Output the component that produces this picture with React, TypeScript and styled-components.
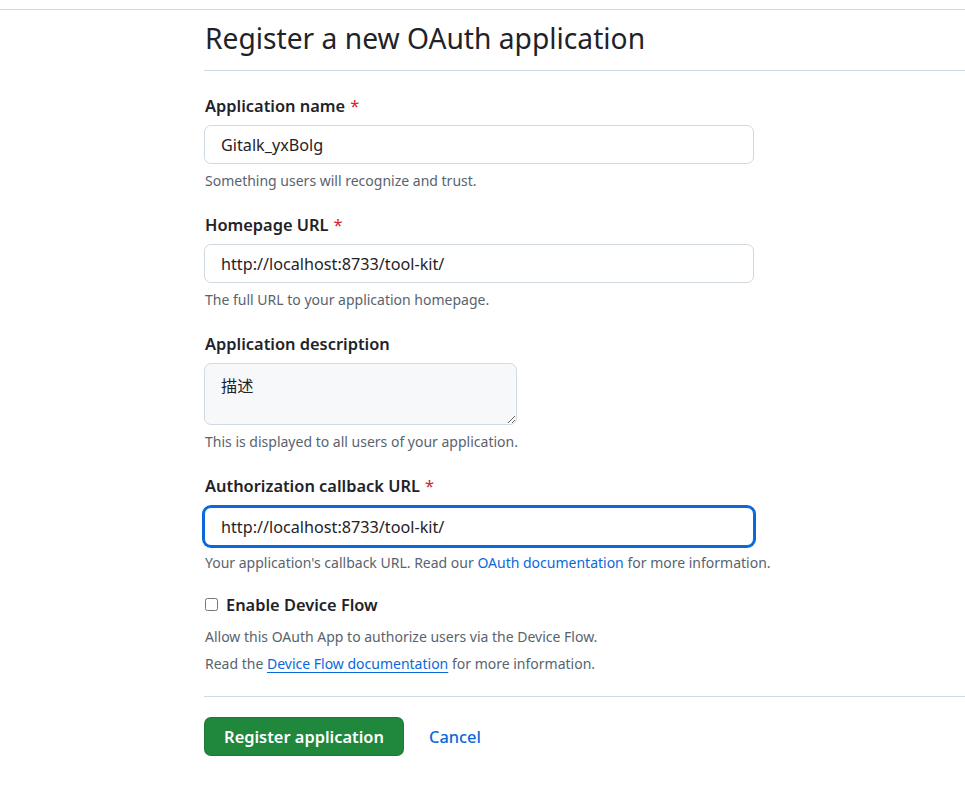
import React from "react";
import styled, { createGlobalStyle } from "styled-components";

const Global = createGlobalStyle`
  html, body { margin: 0; padding: 0; background: #ffffff; }
  body {
    font-family: "Noto Sans", "Open Sans", "Noto Sans CJK SC", sans-serif;
    color: #1f2328;
  }
  * { box-sizing: border-box; }
`;

const Page = styled.div`
  padding-top: 9px;
`;

const TopRule = styled.div`
  border-top: 1px solid #d1d9e0;
`;

const Main = styled.main`
  padding-left: 204px;
`;

const Heading = styled.h1`
  margin: 6px 0 0;
  padding: 0 0 9px 1px;
  font-size: 28.2px;
  font-weight: 400;
  line-height: 45px;
  border-bottom: 1px solid #d1d9e0;
  color: #1f2328;
`;

const Form = styled.form`
  display: flex;
  flex-direction: column;
  padding-top: 22px;
`;

const Group = styled.div<{ $gap?: number }>`
  display: flex;
  flex-direction: column;
  margin-bottom: ${(p) => p.$gap ?? 20}px;
`;

const Label = styled.label`
  font-size: 16.4px;
  font-weight: 600;
  line-height: 25px;
  margin: 0 0 7px 1px;
`;

const Required = styled.span`
  color: #d1242f;
  font-weight: 400;
  margin-left: 5px;
`;

const Input = styled.input<{ $focused?: boolean }>`
  width: 550px;
  height: 39px;
  padding: 0 16px;
  font-family: inherit;
  font-size: 16.2px;
  color: #1f2328;
  background: #ffffff;
  border: 1px solid ${(p) => (p.$focused ? "#0969da" : "#d1d9e0")};
  border-radius: 7px;
  outline: none;
  box-shadow: ${(p) => (p.$focused ? "0 0 0 2px #0969da" : "none")};
  ${(p) => (p.$focused ? "margin-top: 2px;" : "")}
`;

const TextArea = styled.textarea`
  width: 313px;
  height: 62px;
  padding: 10px 16px;
  font-family: inherit;
  font-size: 16.2px;
  line-height: 25px;
  color: #1f2328;
  background: #f6f8fa;
  border: 1px solid #d1d9e0;
  border-radius: 7px;
  resize: vertical;
  outline: none;
`;

const Note = styled.p<{ $mt?: number }>`
  margin: ${(p) => p.$mt ?? 6}px 0 0 1px;
  font-size: 14px;
  line-height: 22px;
  color: #59636e;
`;

const Link = styled.a<{ $underline?: boolean }>`
  color: #0969da;
  text-decoration: ${(p) => (p.$underline ? "underline" : "none")};
  text-underline-offset: 3px;
`;

const CheckRow = styled.label`
  display: flex;
  align-items: center;
  gap: 8px;
  font-size: 16.4px;
  font-weight: 600;
  line-height: 25px;
  margin-left: 1px;
`;

const Check = styled.input`
  width: 13px;
  height: 13px;
  margin: 0;
  accent-color: #0969da;
`;

const Divider = styled.hr`
  border: 0;
  border-top: 1px solid #d1d9e0;
  margin: 21px 0 20px;
`;

const Actions = styled.div`
  display: flex;
  align-items: center;
  gap: 25px;
`;

const PrimaryButton = styled.button`
  height: 39px;
  width: 200px;
  padding: 0;
  white-space: nowrap;
  font-family: inherit;
  font-size: 16.4px;
  font-weight: 600;
  color: #ffffff;
  background: #1f883d;
  border: 1px solid rgba(31, 35, 40, 0.15);
  border-radius: 7px;
  cursor: pointer;
`;

const CancelLink = styled.a`
  font-size: 16.4px;
  font-weight: 500;
  color: #0969da;
  text-decoration: none;
`;

export default function App() {
  return (
    <Page>
      <Global />
      <TopRule />
      <Main>
        <Heading>Register a new OAuth application</Heading>
        <Form onSubmit={(e) => e.preventDefault()}>
          <Group>
            <Label>
              Application name<Required>*</Required>
            </Label>
            <Input defaultValue="Gitalk_yxBolg" />
            <Note>Something users will recognize and trust.</Note>
          </Group>
          <Group>
            <Label>
              Homepage URL<Required>*</Required>
            </Label>
            <Input defaultValue="http://localhost:8733/tool-kit/" />
            <Note>The full URL to your application homepage.</Note>
          </Group>
          <Group>
            <Label>Application description</Label>
            <TextArea defaultValue="描述" />
            <Note>This is displayed to all users of your application.</Note>
          </Group>
          <Group $gap={18}>
            <Label>
              Authorization callback URL<Required>*</Required>
            </Label>
            <Input $focused defaultValue="http://localhost:8733/tool-kit/" />
            <Note>
              Your application's callback URL. Read our{" "}
              <Link href="#">OAuth documentation</Link> for more information.
            </Note>
          </Group>
          <Group $gap={0}>
            <CheckRow>
              <Check type="checkbox" />
              Enable Device Flow
            </CheckRow>
            <Note $mt={9}>Allow this OAuth App to authorize users via the Device Flow.</Note>
            <Note $mt={5}>
              Read the <Link href="#" $underline>Device Flow documentation</Link> for more information.
            </Note>
          </Group>
          <Divider />
          <Actions>
            <PrimaryButton type="button">Register application</PrimaryButton>
            <CancelLink href="#">Cancel</CancelLink>
          </Actions>
        </Form>
      </Main>
    </Page>
  );
}
